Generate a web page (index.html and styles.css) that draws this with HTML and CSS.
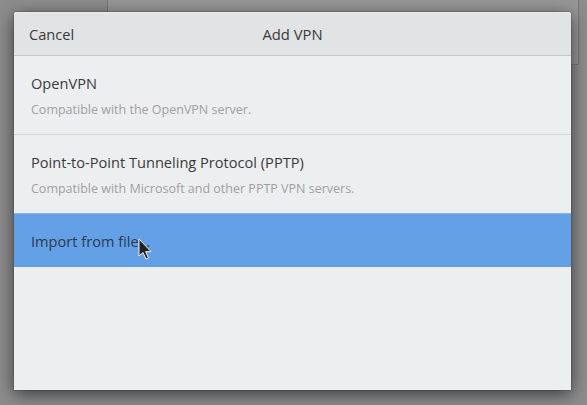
FILE: index.html
```html
<!DOCTYPE html>
<html>
<head>
<meta charset="utf-8">
<link rel="stylesheet" href="styles.css">
</head>
<body>
<div class="backwin"></div>
<div class="dialog">
  <div class="header">
    <span class="cancel">Cancel</span>
    <span class="title">Add VPN</span>
  </div>
  <div class="row">
    <div class="row-title">OpenVPN</div>
    <div class="row-sub">Compatible with the OpenVPN server.</div>
  </div>
  <div class="row">
    <div class="row-title">Point-to-Point Tunneling Protocol (PPTP)</div>
    <div class="row-sub">Compatible with Microsoft and other PPTP VPN servers.</div>
  </div>
  <div class="row selected">
    <div class="row-title">Import from file…</div>
  </div>
</div>
<svg class="cursor" width="16" height="24" viewBox="0 0 16 24">
  <path d="M1 1 L1 18 L5 14.5 L8 21 L10.5 20 L7.6 13.6 L13 13.6 Z" fill="#222" stroke="#eee" stroke-width="1"/>
</svg>
</body>
</html>
```
FILE: styles.css
```css
html, body {
  margin: 0;
  padding: 0;
}
body {
  width: 587px;
  height: 405px;
  overflow: hidden;
  background: #8d8d8d;
  font-family: "Open Sans", "Noto Sans", sans-serif;
  position: relative;
  padding: 12px 0 0 14px;
  box-sizing: border-box;
}
.backwin {
  position: absolute;
  left: 107px;
  top: -2px;
  width: 470px;
  height: 65px;
  background: #979797;
  border: 1px solid #777;
}
.dialog {
  position: relative;
  width: 557px;
  height: 378px;
  background: #edeef0;
  box-shadow: 0 4px 18px rgba(0,0,0,0.6), 0 0 0 1px rgba(0,0,0,0.12);
  border-radius: 3px 3px 0 0;
  display: flex;
  flex-direction: column;
}
.header {
  height: 43px;
  background: #e2e3e5;
  border-bottom: 1px solid #c6c7c9;
  border-radius: 3px 3px 0 0;
  display: flex;
  align-items: center;
  position: relative;
  box-shadow: inset 0 1px 0 #ececee;
}
.cancel {
  margin-left: 15px;
  font-size: 14.6px;
  color: #3a3a3a;
}
.title {
  position: absolute;
  left: 0;
  right: 0;
  text-align: center;
  font-size: 14.8px;
  color: #3a3a3a;
  pointer-events: none;
}
.row {
  height: 79px;
  box-sizing: border-box;
  border-bottom: 1px solid #d2d3d5;
  padding: 17px 17px 0;
  display: flex;
  flex-direction: column;
  gap: 8px;
}
.row-title {
  font-size: 14.6px;
  line-height: 20px;
  color: #3b3b3b;
}
.row-sub {
  font-size: 12.5px;
  line-height: 17px;
  color: #a0a0a0;
}
.row.selected {
  height: 54px;
  padding-top: 0;
  justify-content: center;
  background: #64a0e5;
  border-top: 1px solid #88b6ec;
  border-bottom: none;
  margin-top: -1px;
}
.row.selected .row-title {
  color: #2b3a4f;
}
.cursor {
  position: absolute;
  left: 138px;
  top: 238px;
}
```
